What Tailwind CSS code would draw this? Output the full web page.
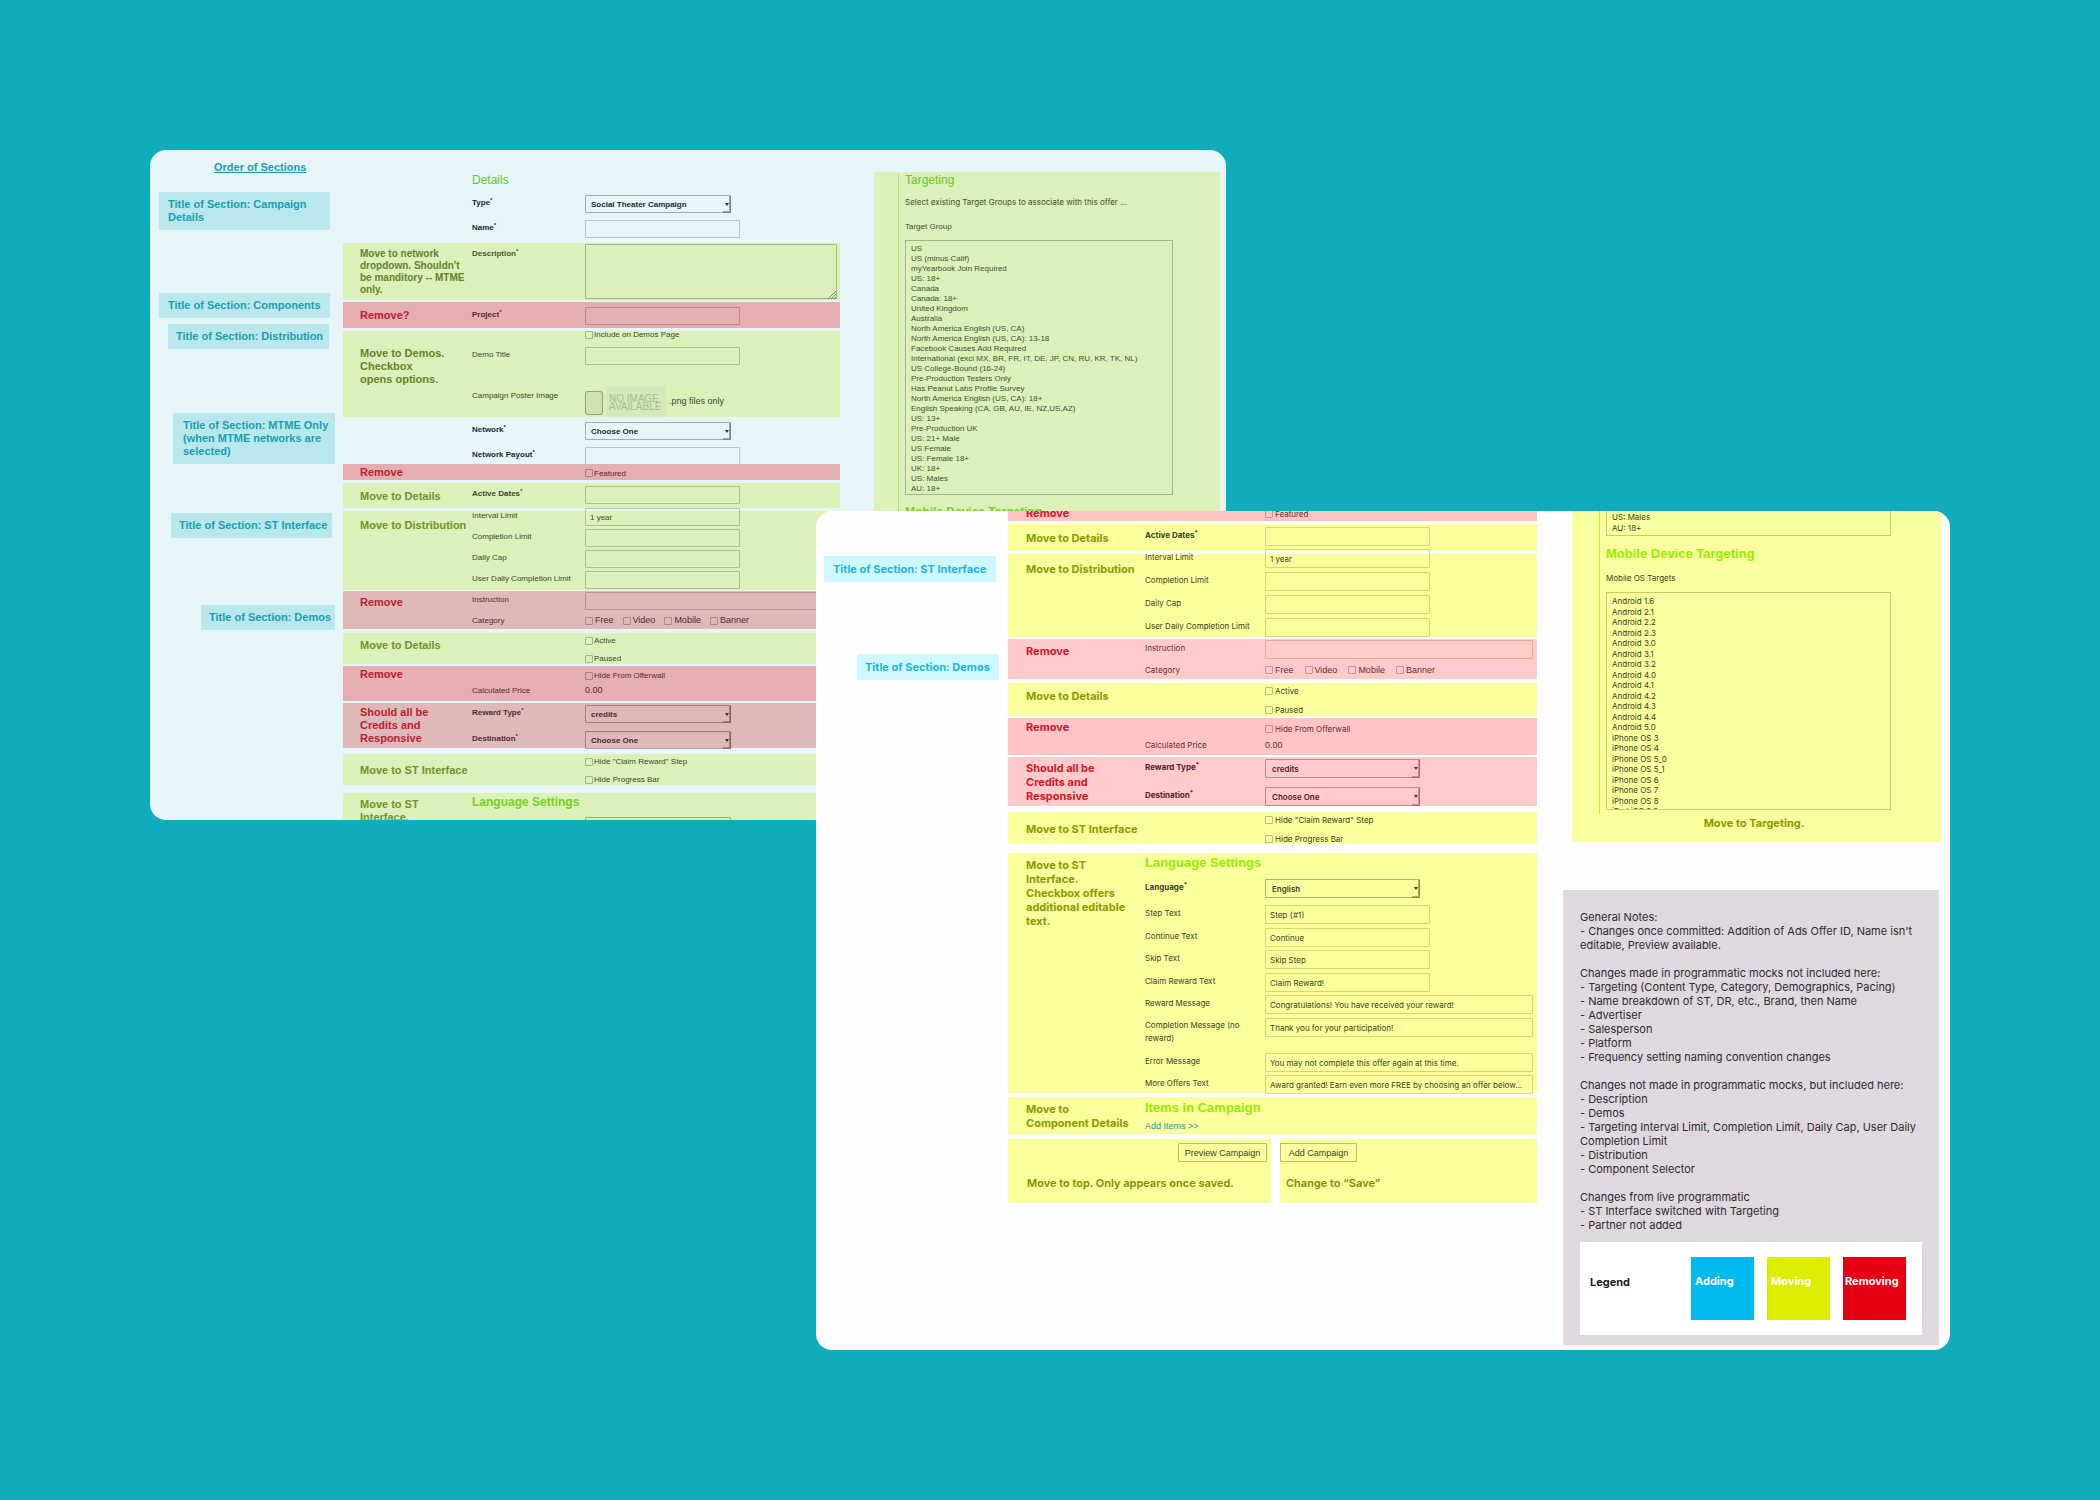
<!DOCTYPE html>
<html lang="en">
<head>
    <meta charset="UTF-8">
    <meta name="viewport" content="width=device-width, initial-scale=1.0">
    <title>Campaign Form Audit</title>

    <!-- Tailwind CSS for styling -->
    <script src="https://cdn.jsdelivr.net/npm/@tailwindcss/browser@4"></script>
</head>
<body class="relative min-h-screen overflow-x-hidden bg-[#10abbd]">

    <!-- Top half of the form, sits behind -->
    <section class="absolute left-[150px] right-[874px] top-[150px] grid h-[670px] grid-cols-[193px_1fr_386px] overflow-hidden rounded-2xl bg-[#e6f6f8] font-['Liberation_Sans',Arial,sans-serif] text-[8px] text-[#1c2a2a]">

        <!-- Order of sections -->
        <aside class="flex flex-col items-start text-[11px] font-bold leading-[13px] text-[#1a9db2] [&_p]:bg-[#b9e8ec]">
            <h2 class="ml-16 mt-[11px] underline">Order of Sections</h2>
            <p class="ml-[9px] mt-[18px] w-[171px] py-[6px] pl-[9px]">Title of Section: Campaign<br>Details</p>
            <p class="ml-[9px] mt-[63px] w-[171px] py-[6px] pl-[9px]">Title of Section: Components</p>
            <p class="ml-[18px] mt-[6px] w-[161px] py-[6px] pl-[8px]">Title of Section: Distribution</p>
            <p class="ml-[23px] mt-[64px] w-[162px] py-[6px] pl-[10px]">Title of Section: MTME Only<br>(when MTME networks are<br>selected)</p>
            <p class="ml-[21px] mt-[49px] w-[161px] py-[6px] pl-[8px]">Title of Section: ST Interface</p>
            <p class="ml-[51px] mt-[67px] w-[134px] py-[6px] pl-[8px]">Title of Section: Demos</p>
        </aside>

        <!-- Form -->
        <form class="flex flex-col leading-[15px] [&_section]:flex [&_section]:shrink-0 [&_h3]:w-[129px] [&_h3]:shrink-0 [&_h3]:pl-[17px] [&_h3]:text-[11px] [&_h3]:font-bold [&_h3]:leading-[13px] [&_[type=text]]:h-[18px] [&_[type=text]]:w-[155px] [&_[type=text]]:rounded-[1px] [&_[type=text]]:border [&_[type=text]]:border-black/20 [&_[type=text]]:px-[4px] [&_select]:h-[18px] [&_select]:w-[146px] [&_select]:appearance-none [&_select]:rounded-[1px] [&_select]:border [&_select]:border-black/30 [&_select]:px-[5px] [&_select]:font-bold [&_[type=checkbox]]:size-[8px] [&_[type=checkbox]]:appearance-none [&_[type=checkbox]]:rounded-[1px] [&_[type=checkbox]]:border [&_[type=checkbox]]:border-black/25">
            <section class="h-[93px]">
                <div class="ml-[129px] pt-[22px]">
                    <h2 class="mb-[7px] text-xs leading-4 text-[#6cc42c]">Details</h2>
                    <div class="flex h-[25px]">
                        <label for="a-type" class="w-[113px] shrink-0 font-bold">Type<sup>*</sup></label>
                        <div class="relative">
                            <select id="a-type"><option>Social Theater Campaign</option></select>
                            <svg class="pointer-events-none absolute right-0 top-0 h-[18px] w-[9px]" viewBox="0 0 9 18"><path d="M3 8h4l-2 3z" fill="#333"/><path d="M8 1v16M1 17h8" stroke="#555" stroke-opacity=".5" stroke-width="2"/></svg>
                        </div>
                    </div>
                    <div class="flex">
                        <label for="a-name" class="w-[113px] shrink-0 font-bold">Name<sup>*</sup></label>
                        <input type="text" id="a-name">
                    </div>
                </div>
            </section>

            <section class="h-[57px] bg-[#dcf0b9]">
                <div class="w-[129px] shrink-0 whitespace-nowrap pl-[17px] pt-[5px] text-[10px] font-bold leading-3 text-[#66812c]">Move to network<br>dropdown. Shouldn't<br>be manditory -- MTME<br>only.</div>
                <div class="flex grow pt-px">
                    <label for="a-desc" class="w-[113px] shrink-0 pt-[2px] font-bold text-[#4a5638]">Description<sup>*</sup></label>
                    <div class="relative mr-[3px] flex grow">
                        <textarea id="a-desc" class="h-[55px] grow resize-none rounded-[1px] border border-black/25"></textarea>
                        <svg class="pointer-events-none absolute bottom-px right-px size-[8px]" viewBox="0 0 8 8"><path d="M0 8l8-8M3 8l5-5M6 8l2-2" stroke="#555" stroke-opacity=".7" fill="none"/></svg>
                    </div>
                </div>
            </section>

            <section class="mt-[2px] h-[26px] bg-[#e5aeb1] text-[#5c2830]">
                <h3 class="pt-[7px] text-[#b8202f]">Remove?</h3>
                <div class="flex pt-[5px]">
                    <label for="a-project" class="w-[113px] shrink-0 font-bold">Project<sup>*</sup></label>
                    <input type="text" id="a-project">
                </div>
            </section>

            <section class="mt-[3px] h-[86px] bg-[#dcf0b9] text-[#3c472e]">
                <h3 class="pt-4 text-[#66812c]">Move to Demos.<br>Checkbox<br>opens options.</h3>
                <div>
                    <label class="ml-[113px] flex h-4 items-start gap-px leading-[8px]"><input type="checkbox">Include on Demos Page</label>
                    <div class="flex h-11">
                        <label for="a-demo" class="w-[113px] shrink-0">Demo Title</label>
                        <input type="text" id="a-demo">
                    </div>
                    <div class="flex">
                        <span class="w-[113px] shrink-0 leading-[10px]">Campaign Poster Image</span>
                        <button type="button" aria-label="Choose poster image" class="h-6 w-[18px] rounded-[3px] border border-black/30 bg-black/5"></button>
                        <span class="-mt-[5px] ml-[3px] flex h-[31px] w-[60px] items-center bg-[#d3e9ba] pl-[3px] pt-[3px] text-[10px] leading-[8px] text-[#a8bb92]">NO IMAGE<br>AVAILABLE</span>
                        <span class="ml-[3px] text-[9px] leading-[20px]">.png files only</span>
                    </div>
                </div>
            </section>

            <section class="h-[47px]">
                <div class="ml-[129px] pt-[5px]">
                    <div class="flex h-[25px]">
                        <label for="a-network" class="w-[113px] shrink-0 font-bold">Network<sup>*</sup></label>
                        <div class="relative">
                            <select id="a-network"><option>Choose One</option></select>
                            <svg class="pointer-events-none absolute right-0 top-0 h-[18px] w-[9px]" viewBox="0 0 9 18"><path d="M3 8h4l-2 3z" fill="#333"/><path d="M8 1v16M1 17h8" stroke="#555" stroke-opacity=".5" stroke-width="2"/></svg>
                        </div>
                    </div>
                    <div class="flex">
                        <label for="a-payout" class="w-[113px] shrink-0 font-bold">Network Payout<sup>*</sup></label>
                        <input type="text" id="a-payout">
                    </div>
                </div>
            </section>

            <section class="h-4 bg-[#e5aeb1] text-[#5c2830]">
                <h3 class="pt-[2px] text-[#b8202f]">Remove</h3>
                <label class="ml-[113px] flex items-center gap-px pt-[2px]"><input type="checkbox">Featured</label>
            </section>

            <section class="mt-[3px] h-[25px] bg-[#dcf0b9] text-[#3c4630]">
                <h3 class="pt-[7px] text-[#6f932a]">Move to Details</h3>
                <div class="flex pt-[3px]">
                    <label for="a-dates" class="w-[113px] shrink-0 font-bold">Active Dates<sup>*</sup></label>
                    <input type="text" id="a-dates">
                </div>
            </section>

            <section class="mt-[3px] h-[79px] bg-[#dcf0b9] text-[#3c472e]">
                <h3 class="whitespace-nowrap pt-2 text-[#6f932a]">Move to Distribution</h3>
                <div class="-mt-[3px]">
                    <div class="flex h-[21px]"><label for="a-interval" class="w-[113px] shrink-0">Interval Limit</label><input type="text" id="a-interval" value="1 year"></div>
                    <div class="flex h-[21px]"><label for="a-completion" class="w-[113px] shrink-0">Completion Limit</label><input type="text" id="a-completion"></div>
                    <div class="flex h-[21px]"><label for="a-cap" class="w-[113px] shrink-0">Daily Cap</label><input type="text" id="a-cap"></div>
                    <div class="flex h-[21px]"><label for="a-user" class="w-[113px] shrink-0">User Daily Completion Limit</label><input type="text" id="a-user"></div>
                </div>
            </section>

            <section class="mt-px h-[38px] bg-[#dfb9ba] text-[#4c2b30]">
                <h3 class="pt-[5px] text-[#b8202f]">Remove</h3>
                <div class="grow pt-px">
                    <div class="mr-1 flex h-[21px]"><label for="a-instruction" class="w-[113px] shrink-0">Instruction</label><input type="text" id="a-instruction" class="grow"></div>
                    <div class="flex">
                        <span class="w-[113px] shrink-0">Category</span>
                        <div class="flex gap-[9px] text-[9px]">
                            <label class="flex items-center gap-[2px]"><input type="checkbox">Free</label>
                            <label class="flex items-center gap-[2px]"><input type="checkbox">Video</label>
                            <label class="flex items-center gap-[2px]"><input type="checkbox">Mobile</label>
                            <label class="flex items-center gap-[2px]"><input type="checkbox">Banner</label>
                        </div>
                    </div>
                </div>
            </section>

            <section class="mt-1 h-[31px] bg-[#dcf0b9] text-[#3c472e]">
                <h3 class="pt-[6px] text-[#6f932a]">Move to Details</h3>
                <div class="ml-[113px]">
                    <label class="mb-[3px] flex items-center gap-px"><input type="checkbox">Active</label>
                    <label class="flex items-center gap-px"><input type="checkbox">Paused</label>
                </div>
            </section>

            <section class="mt-[2px] h-[35px] bg-[#e5aeb1] text-[#5c2830]">
                <h3 class="pt-[2px] text-[#b8202f]">Remove</h3>
                <div class="pt-[2px]">
                    <label class="ml-[113px] flex items-center gap-px"><input type="checkbox">Hide From Offerwall</label>
                    <div class="flex"><span class="w-[113px] shrink-0">Calculated Price</span><span class="text-[9px]">0.00</span></div>
                </div>
            </section>

            <section class="mt-[2px] h-[45px] bg-[#dfb9ba] text-[#4c2b30]">
                <h3 class="pt-[3px] text-[#b8202f]">Should all be<br>Credits and<br>Responsive</h3>
                <div class="pt-[2px]">
                    <div class="flex h-[26px]">
                        <label for="a-reward" class="w-[113px] shrink-0 font-bold">Reward Type<sup>*</sup></label>
                        <div class="relative">
                            <select id="a-reward"><option>credits</option></select>
                            <svg class="pointer-events-none absolute right-0 top-0 h-[18px] w-[9px]" viewBox="0 0 9 18"><path d="M3 8h4l-2 3z" fill="#333"/><path d="M8 1v16M1 17h8" stroke="#644" stroke-opacity=".5" stroke-width="2"/></svg>
                        </div>
                    </div>
                    <div class="flex">
                        <label for="a-destination" class="w-[113px] shrink-0 font-bold">Destination<sup>*</sup></label>
                        <div class="relative">
                            <select id="a-destination"><option>Choose One</option></select>
                            <svg class="pointer-events-none absolute right-0 top-0 h-[18px] w-[9px]" viewBox="0 0 9 18"><path d="M3 8h4l-2 3z" fill="#333"/><path d="M8 1v16M1 17h8" stroke="#644" stroke-opacity=".5" stroke-width="2"/></svg>
                        </div>
                    </div>
                </div>
            </section>

            <section class="mt-[6px] h-[31px] bg-[#dcf0b9] text-[#3c472e]">
                <h3 class="pt-[10px] text-[#6f932a]">Move to ST Interface</h3>
                <div class="ml-[113px]">
                    <label class="mb-[3px] flex items-center gap-px"><input type="checkbox">Hide "Claim Reward" Step</label>
                    <label class="flex items-center gap-px"><input type="checkbox">Hide Progress Bar</label>
                </div>
            </section>

            <section class="mt-2 h-[57px] bg-[#dcf0b9] text-[#3c4630]">
                <h3 class="pt-[5px] text-[#6f932a]">Move to ST<br>Interface.</h3>
                <div class="pt-px">
                    <h2 class="mb-[7px] text-xs font-bold leading-4 text-[#74d31c]">Language Settings</h2>
                    <div class="flex">
                        <label for="a-language" class="w-[113px] shrink-0 font-bold">Language<sup>*</sup></label>
                        <select id="a-language"><option>English</option></select>
                    </div>
                </div>
            </section>
        </form>

        <!-- Targeting -->
        <div class="ml-[34px] mr-[6px] mt-[22px] bg-[#dcf0b9] pl-6 pt-[2px] text-[#434f32]">
            <div class="h-full border-l border-[#b4dc62] pl-[6px]">
                <h2 class="text-xs leading-3 text-[#6cc42c]">Targeting</h2>
                <p class="mt-[9px] whitespace-nowrap font-[Inter,'Liberation_Sans',sans-serif] leading-[14px]">Select existing Target Groups to associate with this offer ...</p>
                <label for="a-groups" class="mt-[11px] block leading-[14px]">Target Group</label>
                <select id="a-groups" multiple class="mt-[6px] block h-[255px] w-[268px] overflow-hidden border border-black/25 pl-[5px] pt-[3px] [scrollbar-width:none] [&_option]:h-[10px] [&_option]:min-h-0 [&_option]:p-0 [&_option]:leading-[10px]">
                    <option>US</option>
                    <option>US (minus Calif)</option>
                    <option>myYearbook Join Required</option>
                    <option>US: 18+</option>
                    <option>Canada</option>
                    <option>Canada: 18+</option>
                    <option>United Kingdom</option>
                    <option>Australia</option>
                    <option>North America English (US, CA)</option>
                    <option>North America English (US, CA): 13-18</option>
                    <option>Facebook Causes Add Required</option>
                    <option>International (excl MX, BR, FR, IT, DE, JP, CN, RU, KR, TK, NL)</option>
                    <option>US College-Bound (16-24)</option>
                    <option>Pre-Production Testers Only</option>
                    <option>Has Peanut Labs Profile Survey</option>
                    <option>North America English (US, CA): 18+</option>
                    <option>English Speaking (CA, GB, AU, IE, NZ,US,AZ)</option>
                    <option>US: 13+</option>
                    <option>Pre-Production UK</option>
                    <option>US: 21+ Male</option>
                    <option>US Female</option>
                    <option>US: Female 18+</option>
                    <option>UK: 18+</option>
                    <option>US: Males</option>
                    <option>AU: 18+</option>
                </select>
                <h2 class="mt-[9px] text-xs font-bold leading-4 text-[#74d31c]">Mobile Device Targeting</h2>
            </div>
        </div>
    </section>

    <!-- Bottom half of the form, sits in front -->
    <section class="absolute left-[816px] right-[150px] top-[511px] grid grid-cols-[192px_1fr_413px] overflow-hidden rounded-2xl bg-[#fdfdfd] font-[Inter,'Liberation_Sans',sans-serif] text-[8px] text-[#3f4222]">

        <!-- Order of sections -->
        <aside class="flex flex-col items-start text-[11px] font-bold leading-[14px] text-[#1fb4d8] [&_p]:bg-[#cdf8fd]">
            <p class="ml-2 mt-[45px] w-[172px] py-[6px] pl-[9px]">Title of Section: ST Interface</p>
            <p class="ml-[41px] mt-[72px] w-[142px] py-[6px] pl-2">Title of Section: Demos</p>
        </aside>

        <!-- Form -->
        <form class="-mt-[7px] flex flex-col leading-4 [&_section]:flex [&_section]:shrink-0 [&_h3]:w-[137px] [&_h3]:shrink-0 [&_h3]:whitespace-nowrap [&_h3]:pl-[18px] [&_h3]:text-[11px] [&_h3]:font-bold [&_h3]:leading-[14px] [&_[type=text]]:h-[19px] [&_[type=text]]:w-[165px] [&_[type=text]]:rounded-[1px] [&_[type=text]]:border [&_[type=text]]:border-[#8a7a10]/30 [&_[type=text]]:px-[4px] [&_select]:h-[19px] [&_select]:w-[155px] [&_select]:appearance-none [&_select]:rounded-[1px] [&_select]:border [&_select]:border-black/30 [&_select]:px-[6px] [&_select]:font-semibold [&_[type=checkbox]]:size-[8px] [&_[type=checkbox]]:appearance-none [&_[type=checkbox]]:rounded-[1px] [&_[type=checkbox]]:border [&_[type=checkbox]]:border-black/25">
            <section class="h-[17px] bg-[#ffc4c4] text-[#6b2a30]">
                <h3 class="pt-[2px] text-[#d3152b]">Remove</h3>
                <label class="ml-[120px] flex items-center gap-[2px] pt-[3px]"><input type="checkbox">Featured</label>
            </section>

            <section class="mt-[3px] h-[27px] bg-[#f8ff9c]">
                <h3 class="pt-[7px] text-[#8b9a00]">Move to Details</h3>
                <div class="flex pt-[3px]">
                    <label for="b-dates" class="w-[120px] shrink-0 font-bold">Active Dates<sup>*</sup></label>
                    <input type="text" id="b-dates">
                </div>
            </section>

            <section class="mt-[3px] h-[83px] bg-[#f8ff9c]">
                <h3 class="pt-2 text-[#8b9a00]">Move to Distribution</h3>
                <div class="-mt-[5px]">
                    <div class="flex h-[23px]"><label for="b-interval" class="w-[120px] shrink-0">Interval Limit</label><input type="text" id="b-interval" value="1 year"></div>
                    <div class="flex h-[23px]"><label for="b-completion" class="w-[120px] shrink-0">Completion Limit</label><input type="text" id="b-completion"></div>
                    <div class="flex h-[23px]"><label for="b-cap" class="w-[120px] shrink-0">Daily Cap</label><input type="text" id="b-cap"></div>
                    <div class="flex h-[23px]"><label for="b-user" class="w-[120px] shrink-0">User Daily Completion Limit</label><input type="text" id="b-user"></div>
                </div>
            </section>

            <section class="mt-[2px] h-10 bg-[#ffcbca] text-[#6b2a30]">
                <h3 class="pt-[5px] text-[#d3152b]">Remove</h3>
                <div class="grow pt-px">
                    <div class="mr-1 flex h-[22px]"><label for="b-instruction" class="w-[120px] shrink-0">Instruction</label><input type="text" id="b-instruction" class="grow"></div>
                    <div class="flex">
                        <span class="w-[120px] shrink-0">Category</span>
                        <div class="flex gap-[11px] text-[9px] font-['Liberation_Sans',Arial,sans-serif]">
                            <label class="flex items-center gap-[2px]"><input type="checkbox">Free</label>
                            <label class="flex items-center gap-[2px]"><input type="checkbox">Video</label>
                            <label class="flex items-center gap-[2px]"><input type="checkbox">Mobile</label>
                            <label class="flex items-center gap-[2px]"><input type="checkbox">Banner</label>
                        </div>
                    </div>
                </div>
            </section>

            <section class="mt-1 h-[33px] bg-[#f8ff9c]">
                <h3 class="pt-[6px] text-[#8b9a00]">Move to Details</h3>
                <div class="ml-[120px]">
                    <label class="mb-[3px] flex items-center gap-[2px]"><input type="checkbox">Active</label>
                    <label class="flex items-center gap-[2px]"><input type="checkbox">Paused</label>
                </div>
            </section>

            <section class="mt-[2px] h-[37px] bg-[#ffc4c4] text-[#6b2a30]">
                <h3 class="pt-[2px] text-[#d3152b]">Remove</h3>
                <div class="pt-[3px]">
                    <label class="ml-[120px] flex items-center gap-[2px]"><input type="checkbox">Hide From Offerwall</label>
                    <div class="flex"><span class="w-[120px] shrink-0">Calculated Price</span><span class="text-[9px] font-['Liberation_Sans',Arial,sans-serif]">0.00</span></div>
                </div>
            </section>

            <section class="mt-[2px] h-[49px] bg-[#ffcbca] text-[#52201f]">
                <h3 class="pt-1 text-[#d3152b]">Should all be<br>Credits and<br>Responsive</h3>
                <div class="pt-[2px]">
                    <div class="flex h-7">
                        <label for="b-reward" class="w-[120px] shrink-0 font-bold">Reward Type<sup>*</sup></label>
                        <div class="relative">
                            <select id="b-reward"><option>credits</option></select>
                            <svg class="pointer-events-none absolute right-0 top-0 h-[19px] w-[9px]" viewBox="0 0 9 19"><path d="M3 8h4l-2 3z" fill="#333"/><path d="M8 1v17M1 18h8" stroke="#a44" stroke-opacity=".5" stroke-width="2"/></svg>
                        </div>
                    </div>
                    <div class="flex">
                        <label for="b-destination" class="w-[120px] shrink-0 font-bold">Destination<sup>*</sup></label>
                        <div class="relative">
                            <select id="b-destination"><option>Choose One</option></select>
                            <svg class="pointer-events-none absolute right-0 top-0 h-[19px] w-[9px]" viewBox="0 0 9 19"><path d="M3 8h4l-2 3z" fill="#333"/><path d="M8 1v17M1 18h8" stroke="#a44" stroke-opacity=".5" stroke-width="2"/></svg>
                        </div>
                    </div>
                </div>
            </section>

            <section class="mt-[6px] h-8 bg-[#f8ff9c]">
                <h3 class="pt-[10px] text-[#8b9a00]">Move to ST Interface</h3>
                <div class="ml-[120px]">
                    <label class="mb-[3px] flex items-center gap-[2px]"><input type="checkbox">Hide "Claim Reward" Step</label>
                    <label class="flex items-center gap-[2px]"><input type="checkbox">Hide Progress Bar</label>
                </div>
            </section>

            <section class="mt-[9px] h-[240px] bg-[#f8ff9c]">
                <h3 class="pt-[5px] text-[#8b9a00]">Move to ST<br>Interface.<br>Checkbox offers<br>additional editable<br>text.</h3>
                <div class="grow pt-[2px]">
                    <h2 class="mb-2 text-[13px] font-bold leading-4 font-['Liberation_Sans',Arial,sans-serif] text-[#97ec00]">Language Settings</h2>
                    <div class="flex h-[26px]">
                        <label for="b-language" class="w-[120px] shrink-0 font-bold">Language<sup>*</sup></label>
                        <div class="relative">
                            <select id="b-language"><option>English</option></select>
                            <svg class="pointer-events-none absolute right-0 top-0 h-[19px] w-[9px]" viewBox="0 0 9 19"><path d="M3 8h4l-2 3z" fill="#333"/><path d="M8 1v17M1 18h8" stroke="#660" stroke-opacity=".5" stroke-width="2"/></svg>
                        </div>
                    </div>
                    <div class="mr-1 [&>div]:flex [&>div]:h-[22px] [&>div:nth-child(odd)]:h-[23px]">
                        <div><label for="b-step" class="w-[120px] shrink-0">Step Text</label><input type="text" id="b-step" value="Step {#1}"></div>
                        <div><label for="b-continue" class="w-[120px] shrink-0">Continue Text</label><input type="text" id="b-continue" value="Continue"></div>
                        <div><label for="b-skip" class="w-[120px] shrink-0">Skip Text</label><input type="text" id="b-skip" value="Skip Step"></div>
                        <div><label for="b-claim" class="w-[120px] shrink-0">Claim Reward Text</label><input type="text" id="b-claim" value="Claim Reward!"></div>
                        <div><label for="b-message" class="w-[120px] shrink-0">Reward Message</label><input type="text" id="b-message" class="grow" value="Congratulations! You have received your reward!"></div>
                    </div>
                    <div class="mr-1 flex h-[35px]"><label for="b-done" class="w-[120px] shrink-0 pt-px leading-[13px]">Completion Message (no<br>reward)</label><input type="text" id="b-done" class="grow" value="Thank you for your participation!"></div>
                    <div class="mr-1 flex h-[22px]"><label for="b-error" class="w-[120px] shrink-0">Error Message</label><input type="text" id="b-error" class="grow" value="You may not complete this offer again at this time."></div>
                    <div class="mr-1 flex"><label for="b-more" class="w-[120px] shrink-0">More Offers Text</label><input type="text" id="b-more" class="grow" value="Award granted! Earn even more FREE by choosing an offer below..."></div>
                </div>
            </section>

            <section class="mt-1 h-[37px] bg-[#f8ff9c]">
                <h3 class="pt-[5px] text-[#8b9a00]">Move to<br>Component Details</h3>
                <div class="pt-[3px]">
                    <h2 class="mb-[2px] text-[13px] font-bold leading-4 font-['Liberation_Sans',Arial,sans-serif] text-[#97ec00]">Items in Campaign</h2>
                    <a href="#" class="block text-[9px] text-[#2a9aa0] font-['Liberation_Sans',Arial,sans-serif]">Add Items &gt;&gt;</a>
                </div>
            </section>

            <div class="mt-[5px] grid grid-cols-[263px_1fr] gap-[9px] text-[11px] leading-[14px] [&>div]:h-[64px] [&>div]:bg-[#f8ff9c] [&>div]:pt-[4px] [&_p]:mt-[14px] [&_p]:font-semibold [&_p]:text-[#7f8c00] [&_button]:h-[19px] [&_button]:rounded-[1px] [&_button]:border [&_button]:border-[#8a7a10]/50 [&_button]:text-[9px] [&_button]:font-['Liberation_Sans',Arial,sans-serif]">
                <div>
                    <button type="button" class="ml-auto mr-1 block w-[89px]">Preview Campaign</button>
                    <p class="pl-[19px]">Move to top. Only appears once saved.</p>
                </div>
                <div>
                    <button type="button" class="block w-[77px]">Add Campaign</button>
                    <p class="pl-[6px]">Change to “Save”</p>
                </div>
            </div>
        </form>

        <!-- Targeting and notes -->
        <div class="pb-[5px]">
            <div class="ml-[35px] mr-[9px] h-[331px] bg-[#f9ff9e] pl-[27px]">
                <div class="h-[303px] border-l border-[#d3e63c] pl-[6px] [&_select]:w-[285px] [&_select]:border-[#8a7a10]/40 [&_select]:[scrollbar-width:none] [&_option]:h-[10px] [&_option]:min-h-0 [&_option]:p-0 [&_option]:leading-[10px] [&_option:nth-child(odd)]:h-[11px]">
                    <select multiple aria-label="Target Group" class="block h-[25px] overflow-hidden border-x border-b pl-[5px] pt-px">
                        <option>US: Males</option>
                        <option>AU: 18+</option>
                    </select>
                    <h2 class="mt-[10px] text-[13px] font-bold leading-4 font-['Liberation_Sans',Arial,sans-serif] text-[#97ec00]">Mobile Device Targeting</h2>
                    <label for="b-os" class="mt-2 block leading-4">Mobile OS Targets</label>
                    <select id="b-os" multiple class="mt-[6px] block h-[218px] overflow-hidden border pl-[5px] pt-[3px]">
                        <option>Android 1.6</option>
                        <option>Android 2.1</option>
                        <option>Android 2.2</option>
                        <option>Android 2.3</option>
                        <option>Android 3.0</option>
                        <option>Android 3.1</option>
                        <option>Android 3.2</option>
                        <option>Android 4.0</option>
                        <option>Android 4.1</option>
                        <option>Android 4.2</option>
                        <option>Android 4.3</option>
                        <option>Android 4.4</option>
                        <option>Android 5.0</option>
                        <option>iPhone OS 3</option>
                        <option>iPhone OS 4</option>
                        <option>iPhone OS 5_0</option>
                        <option>iPhone OS 5_1</option>
                        <option>iPhone OS 6</option>
                        <option>iPhone OS 7</option>
                        <option>iPhone OS 8</option>
                        <option>iPad iOS 3.2</option>
                    </select>
                </div>
                <p class="mr-[32px] mt-[2px] text-center text-[11px] font-bold leading-[14px] text-[#8b9a00]">Move to Targeting.</p>
            </div>

            <div class="ml-[26px] mr-[11px] mt-[48px] bg-[#dfd9df] px-[17px] pb-[10px] pt-5 text-[11px] leading-[14px] text-[#2d2a30]">
                <p>General Notes:<br>- Changes once committed: Addition of Ads Offer ID, Name isn't<br>editable, Preview available.</p>
                <p class="mt-[14px]">Changes made in programmatic mocks not included here:<br>- Targeting (Content Type, Category, Demographics, Pacing)<br>- Name breakdown of ST, DR, etc., Brand, then Name<br>- Advertiser<br>- Salesperson<br>- Platform<br>- Frequency setting naming convention changes</p>
                <p class="mt-[14px]">Changes not made in programmatic mocks, but included here:<br>- Description<br>- Demos<br>- Targeting Interval Limit, Completion Limit, Daily Cap, User Daily<br>Completion Limit<br>- Distribution<br>- Component Selector</p>
                <p class="mt-[14px]">Changes from live programmatic<br>- ST Interface switched with Targeting<br>- Partner not added</p>

                <!-- Legend -->
                <div class="mt-[10px] flex h-[93px] items-center gap-[13px] bg-white pl-[10px] pr-4 font-bold text-white">
                    <span class="mb-[14px] mr-auto text-[#1a1a1a]">Legend</span>
                    <div class="size-[63px] bg-[#00b9ee] pl-1 pt-[17px]">Adding</div>
                    <div class="size-[63px] bg-[#dcee00] pl-1 pt-[17px]">Moving</div>
                    <div class="size-[63px] bg-[#e60014] pl-[2px] pt-[17px]">Removing</div>
                </div>
            </div>
        </div>
    </section>

</body>
</html>
